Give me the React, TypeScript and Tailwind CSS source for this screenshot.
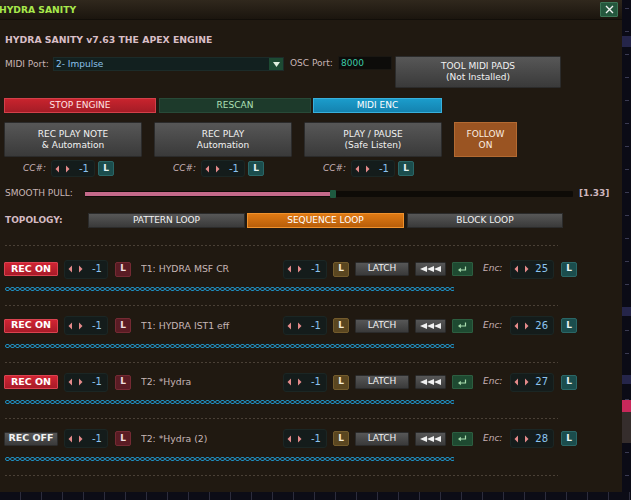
import React from 'react'

const Arrows = () => (
    <svg width="16" height="8" viewBox="0 0 16 8" className="shrink-0">
        <polygon points="4,0.5 0.5,4 4,7.5" fill="#e48a8a" />
        <polygon points="11,0.5 14.5,4 11,7.5" fill="#e48a8a" />
    </svg>
)

function Spinner({ value, h = 'h-[19px]' }: { value: string; h?: string }) {
    return (
        <div className={`w-[44px] ${h} shrink-0 rounded-[3px] bg-[#141c1b] border border-[#1b2624] flex items-center justify-between pl-[3px] pr-[5px]`}>
            <Arrows />
            <span className="text-[10px] leading-none text-[#8cc4f0]">{value}</span>
        </div>
    )
}

function LBox({ tone, ml }: { tone: 'teal' | 'red' | 'brown'; ml: string }) {
    const cls = {
        teal: 'bg-[#1b4d4d] border-[#2a6666] text-[#e8f4f4]',
        red: 'bg-[#5a1c24] border-[#742a33] text-[#f0e0e0]',
        brown: 'bg-[#5a4620] border-[#735b2c] text-[#f4ecd8]',
    }[tone]
    return (
        <div className={`${ml} w-[16px] h-[15px] shrink-0 border rounded-[2px] flex items-center justify-center text-[9px] font-bold ${cls}`}>
            L
        </div>
    )
}

const grayBtn = 'bg-gradient-to-b from-[#575757] to-[#3a3a3a] border border-[#2b2b2b] text-[#f2f2f2]'

function Chain() {
    return (
        <svg width="449" height="4" className="block">
            <defs>
                <pattern id="chain" width="5" height="4" patternUnits="userSpaceOnUse">
                    <rect x="0.5" y="0.5" width="4" height="3" rx="1.5" fill="none" stroke="#1d8fc2" strokeWidth="1" />
                </pattern>
            </defs>
            <rect width="449" height="4" fill="url(#chain)" />
        </svg>
    )
}

const Sep = () => (
    <div className="ml-[1px] w-[553px] h-px bg-[repeating-linear-gradient(90deg,#4a4036_0_2px,transparent_2px_4px)]" />
)

interface Track {
    on: boolean
    name: string
    enc: string
}

const tracks: Track[] = [
    { on: true, name: 'T1: HYDRA MSF CR', enc: '25' },
    { on: true, name: 'T1: HYDRA IST1 eff', enc: '26' },
    { on: true, name: 'T2: *Hydra', enc: '27' },
    { on: false, name: 'T2: *Hydra (2)', enc: '28' },
]

function TrackRow({ t }: { t: Track }) {
    return (
        <div className="flex flex-col">
            <div className="flex items-center h-[20px]">
                <div className={`w-[54px] h-[14px] shrink-0 flex items-center justify-center text-[9.5px] font-bold rounded-[1px] ${t.on ? 'bg-gradient-to-b from-[#d12433] to-[#a81b28] border border-[#d94350] text-white' : grayBtn}`}>
                    {t.on ? 'REC ON' : 'REC OFF'}
                </div>
                <div className="ml-[6px]"><Spinner value="-1" /></div>
                <LBox tone="red" ml="ml-[7px]" />
                <div className="ml-[10px] w-[142px] shrink-0 text-[9.3px] text-[#c6b6b6] truncate">{t.name}</div>
                <Spinner value="-1" />
                <LBox tone="brown" ml="ml-[6px]" />
                <div className={`ml-[6px] w-[54px] h-[14px] shrink-0 flex items-center justify-center text-[9px] rounded-[1px] ${grayBtn}`}>LATCH</div>
                <div className={`ml-[6px] w-[31px] h-[14px] shrink-0 flex items-center justify-center rounded-[1px] ${grayBtn}`}>
                    <svg width="22" height="6" viewBox="0 0 22 6">
                        <polygon points="0,3 7,0 7,6" fill="#f0f0f0" />
                        <polygon points="7,3 14,0 14,6" fill="#f0f0f0" />
                        <polygon points="14,3 21,0 21,6" fill="#f0f0f0" />
                    </svg>
                </div>
                <div className="ml-[6px] w-[21px] h-[14px] shrink-0 flex items-center justify-center rounded-[1px] bg-[#1e4a31] border border-[#2c5e40]">
                    <svg width="9" height="7" viewBox="0 0 9 7">
                        <path d="M7.5 0.5 V4 H2" stroke="#a8dcae" strokeWidth="1.2" fill="none" />
                        <polygon points="0,4 2.8,1.8 2.8,6.2" fill="#a8dcae" />
                    </svg>
                </div>
                <div className="ml-[10px] w-[27px] shrink-0 text-[9px] italic text-[#c6b0b4]">Enc:</div>
                <Spinner value={t.enc} />
                <LBox tone="teal" ml="ml-[7px]" />
            </div>
            <div className="mt-[8px] ml-[1px]"><Chain /></div>
            <div className="mt-[14px]"><Sep /></div>
            <div className="h-[9.5px]" />
        </div>
    )
}

function CCGroup() {
    return (
        <div className="w-[150px] shrink-0 flex items-center pl-[19px] h-[17px]">
            <span className="w-[28px] text-[9px] italic text-[#c6b0b4]">CC#:</span>
            <Spinner value="-1" h="h-[17px]" />
            <LBox tone="teal" ml="ml-[3px]" />
        </div>
    )
}

export default function App() {
    const ticks = [8, 31, 54, 77, 100, 123, 146, 169, 192, 215, 238, 261, 284, 330, 353, 376, 399, 452, 475]
    return (
        <div className="w-[631px] h-[500px] flex flex-col bg-[#0a0a14] overflow-hidden font-['DejaVu_Sans',sans-serif]">
            <div className="flex h-[492px]">
                <div className="w-[622px] flex flex-col bg-[#201911]">
                    {/* title bar */}
                    <div className="h-[20px] shrink-0 flex items-center justify-between pr-[4px] bg-gradient-to-b from-[#30281d] to-[#1b150e] border-b border-[#120e09]">
                        <span className="-ml-[1px] text-[9.2px] font-bold text-[#a8e84c]">HYDRA SANITY</span>
                        <div className="w-[18px] h-[15px] flex items-center justify-center bg-[#24573d] border border-[#3d7556] rounded-[1px]">
                            <svg width="9" height="9" viewBox="0 0 9 9">
                                <path d="M1 1 L8 8 M8 1 L1 8" stroke="#f2f2f2" strokeWidth="1.4" />
                            </svg>
                        </div>
                    </div>

                    <div className="flex flex-col pl-[4px]">
                        <div className="mt-[13px] h-[14px] leading-[14px] pl-[1px] text-[9.3px] font-bold text-[#d9bec6]">
                            HYDRA SANITY v7.63 THE APEX ENGINE
                        </div>

                        {/* midi port row */}
                        <div className="mt-[9px] flex items-start h-[32px]">
                            <span className="w-[49px] pl-[1px] h-[16px] leading-[16px] text-[9px] text-[#c8b6b6]">MIDI Port:</span>
                            <div className="mt-[1px] w-[231px] h-[14px] flex bg-[#12201f] border border-[#1c2b29]">
                                <span className="flex-1 pl-[2px] text-[9px] leading-[12px] text-[#8cc0ea]">2- Impulse</span>
                                <div className="w-[14px] h-full flex items-center justify-center bg-[#1d4a33]">
                                    <svg width="7" height="5" viewBox="0 0 7 5"><polygon points="0,0 7,0 3.5,5" fill="#e0f0e0" /></svg>
                                </div>
                            </div>
                            <span className="ml-[6px] w-[48px] h-[15px] leading-[15px] text-[9px] text-[#c8b6b6]">OSC Port:</span>
                            <div className="w-[54px] h-[14px] bg-[#0d0c0a] border border-[#1a1712] pl-[2px] text-[9px] leading-[12px] text-[#3ccaa8]">8000</div>
                            <div className={`ml-[3px] w-[166px] h-[32px] flex flex-col items-center justify-center text-[9px] leading-[11px] rounded-[1px] ${grayBtn}`}>
                                <span>TOOL MIDI PADS</span>
                                <span>(Not Installed)</span>
                            </div>
                        </div>

                        {/* engine buttons */}
                        <div className="mt-[10px] flex h-[15px] text-[9px]">
                            <div className="w-[152px] flex items-center justify-center bg-gradient-to-b from-[#c8242e] to-[#a51c26] border border-[#d2404a] text-[#ffe4e4]">STOP ENGINE</div>
                            <div className="ml-[3px] w-[152px] flex items-center justify-center bg-[#1d3a2b] border border-[#284a38] text-[#aee0b6]">RESCAN</div>
                            <div className="ml-[2px] w-[129px] flex items-center justify-center bg-gradient-to-b from-[#1b9ccb] to-[#1483b0] border border-[#38b0dc] text-white">MIDI ENC</div>
                        </div>

                        {/* transport buttons */}
                        <div className="mt-[9px] flex h-[35px] gap-[12px] text-[9px] leading-[11px]">
                            {[['REC PLAY NOTE', '& Automation'], ['REC PLAY', 'Automation'], ['PLAY / PAUSE', '(Safe Listen)']].map(([a, b]) => (
                                <div key={a} className={`w-[138px] flex flex-col items-center justify-center rounded-[1px] ${grayBtn}`}>
                                    <span>{a}</span>
                                    <span>{b}</span>
                                </div>
                            ))}
                            <div className="w-[63px] flex flex-col items-center justify-center bg-[#9a5422] border border-[#b36a32] text-[#fbeee0]">
                                <span>FOLLOW</span>
                                <span>ON</span>
                            </div>
                        </div>

                        <div className="mt-[3px] flex">
                            <CCGroup />
                            <CCGroup />
                            <CCGroup />
                        </div>

                        {/* smooth pull */}
                        <div className="mt-[10px] flex items-center h-[14px]">
                            <span className="w-[81px] pl-[1px] text-[9px] text-[#c8b6b6]">SMOOTH PULL:</span>
                            <div className="w-[488px] h-[6px] flex items-center bg-[#0e0b07] rounded-[1px]">
                                <div className="w-[245px] h-[4px] bg-[#c46a8a]" />
                                <div className="w-[6px] h-[8px] bg-[#1e5a40] rounded-[1px]" />
                            </div>
                            <span className="ml-[6px] text-[9px] font-bold text-[#cdb5bd]">[1.33]</span>
                        </div>

                        {/* topology */}
                        <div className="mt-[12px] flex items-center h-[15px] text-[9px]">
                            <span className="w-[84px] pl-[1px] font-bold text-[#d4bac2]">TOPOLOGY:</span>
                            <div className={`w-[157px] h-full flex items-center justify-center ${grayBtn}`}>PATTERN LOOP</div>
                            <div className="ml-[2px] w-[157px] h-full flex items-center justify-center bg-gradient-to-b from-[#e07a14] to-[#b85e0a] border border-[#ef922e] text-white">SEQUENCE LOOP</div>
                            <div className={`ml-[3px] w-[156px] h-full flex items-center justify-center ${grayBtn}`}>BLOCK LOOP</div>
                        </div>

                        <div className="mt-[17px]"><Sep /></div>
                        <div className="h-[13px]" />

                        {tracks.map((t) => <TrackRow key={t.enc} t={t} />)}
                    </div>
                </div>

                {/* right edge of host */}
                <div className="w-[9px] relative bg-[#0b0b16]">
                    {ticks.map((y) => (
                        <div key={y} className="absolute left-[3px] w-[4px] h-px bg-[#3a3a52]" style={{ top: y }} />
                    ))}
                    <div className="absolute left-0 w-full top-[36px] h-[11px] bg-[#25254a]" />
                    <div className="absolute left-0 w-full top-[307px] h-[9px] bg-[#25254a]" />
                    <div className="absolute left-0 w-full top-[375px] h-[9px] bg-[#25254a]" />
                    <div className="absolute left-0 w-full top-[400px] h-[12px] bg-[#c8285a]" />
                    <div className="absolute left-0 w-full top-[412px] h-[31px] bg-[#352d2c]" />
                </div>
            </div>
            <div className="h-[8px] bg-[repeating-linear-gradient(90deg,#0c0c16_0_20px,#2c2c3c_20px_21px)]" />
        </div>
    )
}
